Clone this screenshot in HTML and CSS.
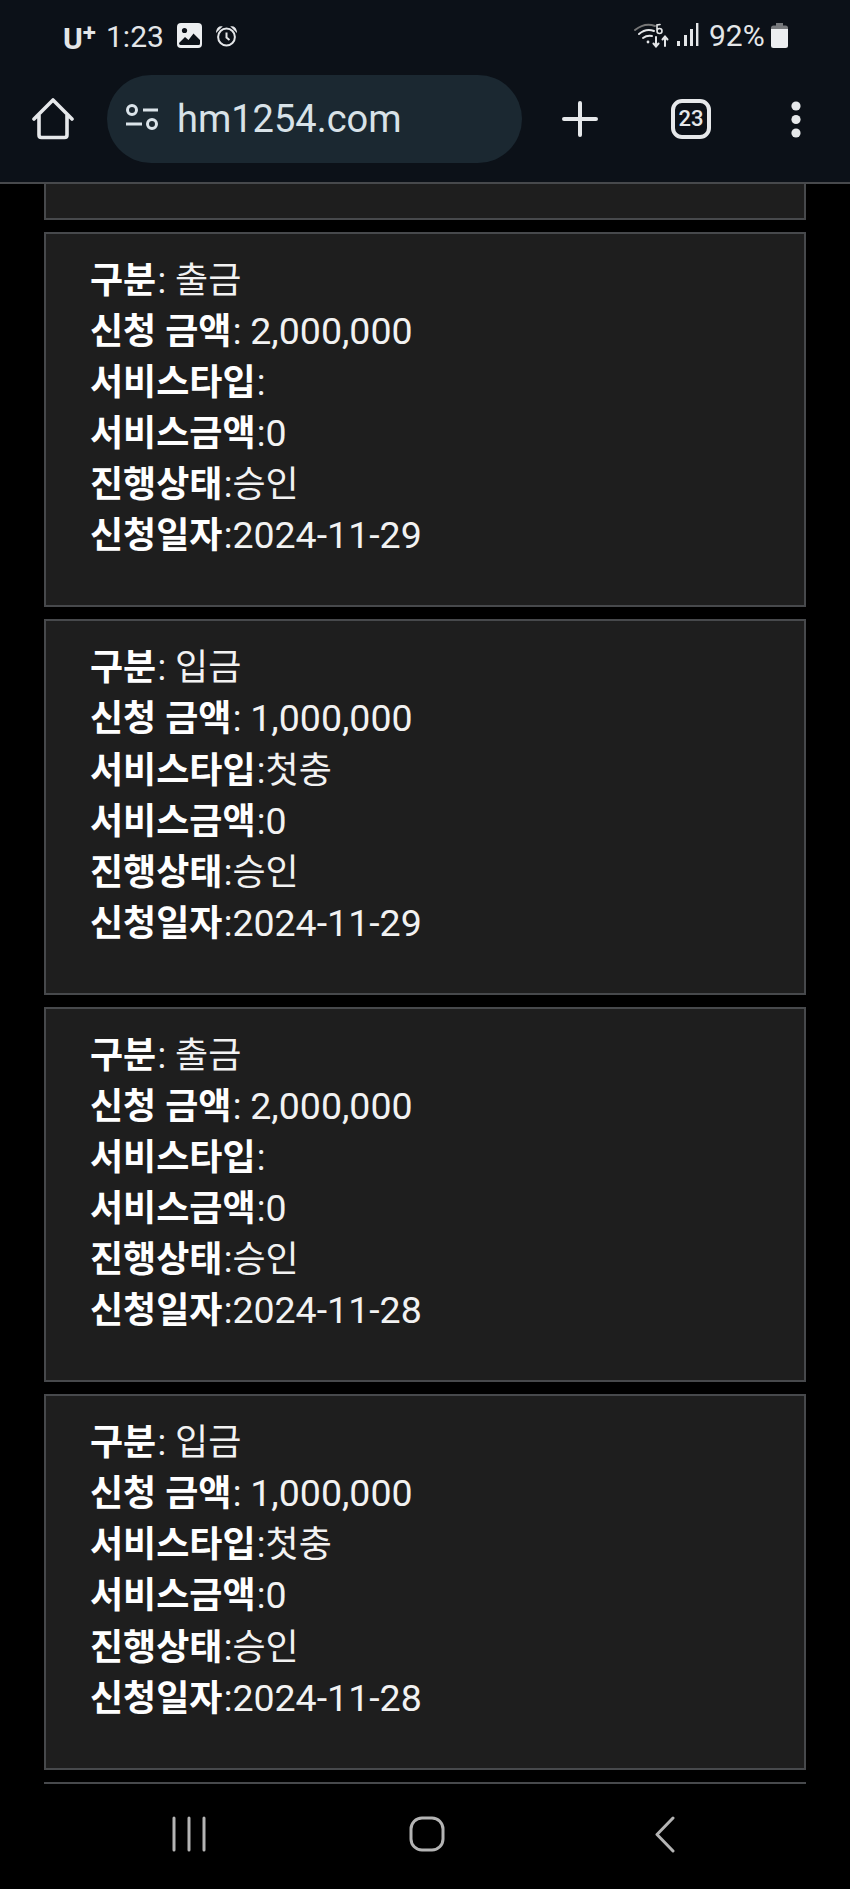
FILE: index.html
```html
<!DOCTYPE html>
<html>
<head>
    <meta charset="utf-8" />
    <title>hm1254.com</title>
    <link rel="stylesheet" href="styles.css">
</head>
<body>
    <header class="browser">
        <div class="status">
            <span class="carrier">U<sup>+</sup></span>
            <span class="clock">1:23</span>
            <svg class="ic-gallery" width="25" height="25" viewBox="0 0 25 25">
                <rect width="25" height="25" rx="4" fill="#eceef0"/>
                <circle cx="7.5" cy="7.5" r="2.6" fill="#0c1118"/>
                <path d="M2 20l6-6 3.5 3 5-6.5L23 17v3.5q0 1.5-1.5 1.5h-18Q2 22 2 20z" fill="#0c1118"/>
            </svg>
            <svg class="ic-alarm" width="21" height="21" viewBox="0 0 21 21" fill="none" stroke="#e4e6e8">
                <circle cx="10.5" cy="11" r="8.4" stroke-width="2"/>
                <path d="M10.5 6.5V11.5L13.5 14" stroke-width="2"/>
                <path d="M1 5Q2 1 5 1ZM20 5Q19 1 16 1Z" fill="#e4e6e8" stroke-width="1.5"/>
            </svg>
            <span class="status-gap"></span>
            <svg class="ic-wifi" width="35" height="25" viewBox="0 0 35 25" fill="none" stroke="#e4e6e8" stroke-linecap="round">
                <path d="M1 7Q11-1 21 3" stroke="#777" stroke-width="2"/>
                <path d="M5 11Q12 5 20 8" stroke-width="2"/>
                <path d="M9 15Q13 12 18 13" stroke-width="2"/>
                <circle cx="14" cy="19" r="1.4" fill="#e4e6e8" stroke="none"/>
                <path d="M23 8V2L26 1.5M23 8a2.5 2.5 0 1 0 5 0a2.5 2.5 0 1 0-5 0" stroke-width="1.6"/>
                <path d="M22 14V23M19.5 20.5L22 23.5L24.5 20.5" stroke-width="2"/>
                <path d="M31 23V14M28.5 16.5L31 13.5L33.5 16.5" stroke-width="2"/>
            </svg>
            <svg class="ic-signal" width="22" height="24" viewBox="0 0 22 24" fill="#e4e6e8">
                <rect x="0" y="18" width="3" height="5"/>
                <rect x="7" y="12" width="3" height="11"/>
                <rect x="13" y="6" width="3" height="17"/>
                <rect x="19" y="0" width="2.4" height="23"/>
            </svg>
            <span class="battery-text">92%</span>
            <svg class="ic-battery" width="17" height="25" viewBox="0 0 17 25">
                <path d="M5 0h7v3H5z" fill="#77797c"/>
                <path d="M2.5 2.5h12Q17 2.500 17 5v3H0V5q0-2.500 2.500-2.500z" fill="#77797c"/>
                <path d="M0 6h17v16.500q0 2.500-2.500 2.500h-12Q0 25 0 22.500z" fill="#eceef0"/>
            </svg>
        </div>
        <div class="toolbar">
            <svg class="ic-home" width="42" height="42" viewBox="0 0 42 42" fill="none" stroke="#e6e8ea" stroke-width="3.600" stroke-linejoin="round" stroke-linecap="round">
                <path d="M2 21L21 2L40 21M7 17V37q0 2.500 2.500 2.500h23q2.500 0 2.500-2.500V17"/>
            </svg>
            <div class="omnibox">
                <svg class="ic-tune" width="34" height="30" viewBox="0 0 34 30" fill="none" stroke="#dbe4ea" stroke-width="3">
                    <circle cx="7" cy="6" r="4.500"/>
                    <path d="M18 6H33M1 20H17"/>
                    <circle cx="27" cy="20" r="4.500"/>
                </svg>
                <span class="url">hm1254.com</span>
            </div>
            <svg class="ic-plus" width="36" height="36" viewBox="0 0 36 36" stroke="#e6e8ea" stroke-width="4" stroke-linecap="round">
                <path d="M18 2V34M2 18H34"/>
            </svg>
            <div class="tabs">23</div>
            <svg class="ic-dots" width="10" height="37" viewBox="0 0 10 37" fill="#e6e8ea">
                <circle cx="5" cy="5" r="4.600"/>
                <circle cx="5" cy="18.500" r="4.600"/>
                <circle cx="5" cy="32" r="4.600"/>
            </svg>
        </div>
    </header>

    <main class="list">
        <div class="card card-cut"></div>

        <div class="card">
            <p><b>구분</b>: 출금</p>
            <p><b>신청 금액</b>: <span class="num">2,000,000</span></p>
            <p><b>서비스타입</b>:</p>
            <p><b>서비스금액</b>:<span class="num">0</span></p>
            <p><b>진행상태</b>:승인</p>
            <p><b>신청일자</b>:<span class="num">2024-11-29</span></p>
        </div>

        <div class="card">
            <p><b>구분</b>: 입금</p>
            <p><b>신청 금액</b>: <span class="num">1,000,000</span></p>
            <p><b>서비스타입</b>:첫충</p>
            <p><b>서비스금액</b>:<span class="num">0</span></p>
            <p><b>진행상태</b>:승인</p>
            <p><b>신청일자</b>:<span class="num">2024-11-29</span></p>
        </div>

        <div class="card">
            <p><b>구분</b>: 출금</p>
            <p><b>신청 금액</b>: <span class="num">2,000,000</span></p>
            <p><b>서비스타입</b>:</p>
            <p><b>서비스금액</b>:<span class="num">0</span></p>
            <p><b>진행상태</b>:승인</p>
            <p><b>신청일자</b>:<span class="num">2024-11-28</span></p>
        </div>

        <div class="card">
            <p><b>구분</b>: 입금</p>
            <p><b>신청 금액</b>: <span class="num">1,000,000</span></p>
            <p><b>서비스타입</b>:첫충</p>
            <p><b>서비스금액</b>:<span class="num">0</span></p>
            <p><b>진행상태</b>:승인</p>
            <p><b>신청일자</b>:<span class="num">2024-11-28</span></p>
        </div>

        <div class="card"></div>
    </main>

    <nav class="softkeys">
        <svg width="34" height="36" viewBox="0 0 34 36" stroke="#b4b4b4" stroke-width="3" stroke-linecap="round">
            <path d="M2 2V34M17 2V34M32 2V34"/>
        </svg>
        <svg width="36" height="36" viewBox="0 0 36 36" fill="none" stroke="#b4b4b4" stroke-width="3">
            <rect x="2" y="2" width="32" height="32" rx="11"/>
        </svg>
        <svg width="20" height="37" viewBox="0 0 20 37" fill="none" stroke="#b4b4b4" stroke-width="3" stroke-linecap="round" stroke-linejoin="round">
            <path d="M18 2L2 18.500L18 35"/>
        </svg>
    </nav>
</body>
</html>
```

FILE: styles.css
```css
html,
body {
    margin: 0;
    background: #000;
}

body {
    /* The whole phone screen, nothing scrolls */
    height: 1889px;
    display: flex;
    flex-direction: column;
    overflow: hidden;
    font-family: Roboto, "Noto Sans CJK KR", sans-serif;
}

/* Browser chrome */
.browser {
    height: 182px;
    flex: none;
    background: #0c1118;
    border-bottom: 2px solid #47494c;
}

.status {
    height: 75px;
    padding: 23px 62px 0 63px;
    box-sizing: border-box;
    display: flex;
    align-items: flex-start;
    color: #e4e6e8;
}

.carrier {
    font-size: 30px;
    font-weight: 700;
    line-height: 25px;
    margin-top: 3px;
    width: 43px;
}

.carrier sup {
    font-size: 24px;
    line-height: 0;
    vertical-align: 8px;
}

.clock {
    font-size: 30px;
    line-height: 25px;
    margin-top: 1px;
    width: 71px;
}

.ic-alarm {
    margin: 3px 0 0 14px;
}

.status-gap {
    flex: 1;
}

.ic-signal {
    margin-left: 8px;
}

.battery-text {
    font-size: 30px;
    line-height: 25px;
    margin-left: 10px;
    width: 62px;
}

.toolbar {
    display: flex;
    align-items: center;
    height: 88px;
    padding-left: 32px;
}

.omnibox {
    width: 415px;
    height: 88px;
    margin-left: 33px;
    padding-left: 18px;
    box-sizing: border-box;
    display: flex;
    align-items: center;
    border-radius: 44px;
    background: #1b2831;
}

.url {
    margin-left: 18px;
    font-size: 38px;
    color: #d8e2e8;
}

.ic-plus {
    margin-left: 40px;
}

.tabs {
    width: 40px;
    height: 40px;
    margin-left: 73px;
    box-sizing: border-box;
    border: 4px solid #e6e8ea;
    border-radius: 11px;
    color: #e6e8ea;
    font-size: 22px;
    font-weight: 500;
    line-height: 32px;
    text-align: center;
}

.ic-dots {
    margin-left: 80px;
}

/* Transaction cards */
.list {
    flex: 1;
    min-height: 0;
    overflow: hidden;
    padding: 0 44px;
}

.card {
    height: 375.4px;
    box-sizing: border-box;
    margin-bottom: 12px;
    padding: 22px 0 0 44px;
    background: #1e1e1e;
    border: 2px solid #47494c;
    color: #f2f2f2;
    font-size: 36px;
    line-height: 51.1px;
}

.card-cut {
    height: 36px;
    border-top: 0;
}

.card p {
    margin: 0;
}

.card b {
    color: #fff;
    margin-right: 1.2px;
}

/* Digits sit a little wider than the Hangul around them */
.num {
    font-size: 37.5px;
    line-height: 1;
}

/* Android soft keys */
.softkeys {
    height: 105px;
    flex: none;
    padding: 32px 0 0 3px;
    box-sizing: border-box;
    background: #000;
    display: grid;
    grid-template-columns: repeat(3, 238px);
    justify-content: center;
    justify-items: center;
    align-items: start;
}
```
